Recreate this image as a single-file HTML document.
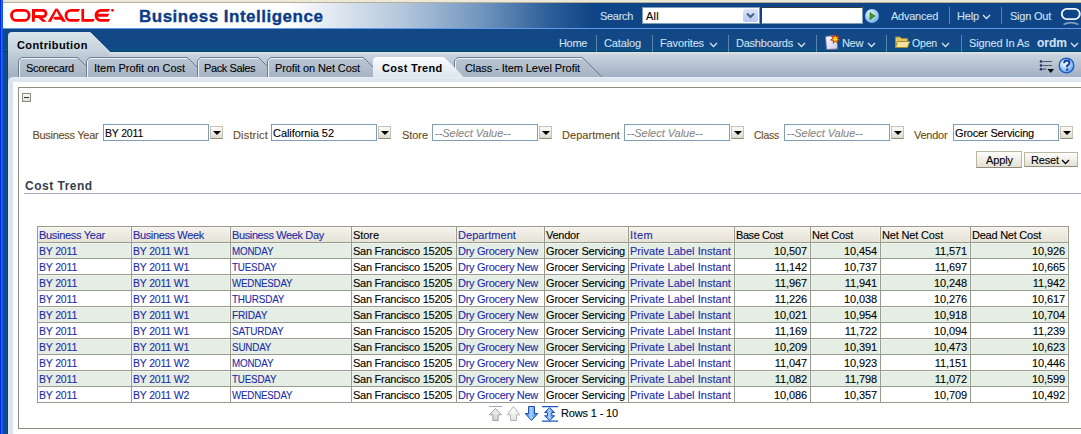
<!DOCTYPE html>
<html><head><meta charset="utf-8">
<style>
*{margin:0;padding:0;box-sizing:border-box}
html,body{width:1081px;height:434px;overflow:hidden;background:#fff;position:relative}
body{font-family:"Liberation Sans",sans-serif;font-size:11px}
.a{position:absolute}
.t{position:absolute;font-size:11px;line-height:13px;white-space:nowrap;letter-spacing:-0.3px;-webkit-text-stroke:0.1px}
.hl{color:#cde2f3}
.sep{position:absolute;width:1px;background:#5a82ad}
.chev{position:absolute;width:7px;height:4px}
.lbl{color:#6a4a14}
.inp{position:absolute;height:17px;border:1px solid #7f9db9;background:#fff}
.btn{position:absolute;width:13px;height:13px;border:1px solid #c6c3b4;border-bottom-color:#8c8a7e;background:linear-gradient(#fbfbf8,#dedbd0)}
.btn:after{content:"";position:absolute;left:2px;top:4px;border-left:4px solid transparent;border-right:4px solid transparent;border-top:4px solid #000}
.tab{position:absolute;top:57px;height:20px}
.cell{position:absolute;font-size:11px;line-height:13px;white-space:nowrap;letter-spacing:-0.3px;-webkit-text-stroke:0.1px}
.lnk{color:#1c2ca8}
</style></head><body>

<div class="a" style="left:0;top:0;width:1081px;height:2px;background:#ece9d8"></div>
<div class="a" style="left:0;top:2px;width:1081px;height:1px;background:#b8ae98"></div>
<div class="a" style="left:3px;top:3px;width:1078px;height:25px;background:linear-gradient(90deg,#fff 0px,#fff 284px,#b3c6dc 400px,#6f94bd 480px,#2e5f9a 545px,#0f4586 590px,#0f4586 1078px)"></div>
<div class="a" style="left:3px;top:28px;width:1078px;height:1px;background:#5d9ae8"></div>
<div class="a" style="left:3px;top:29px;width:1078px;height:23px;background:linear-gradient(#124885 0px,#114886 19px,#0b5282 20px,#0b5282 22px)"></div>
<div class="a" style="left:3px;top:51px;width:1078px;height:1px;background:#083e6c"></div>
<div class="a" style="left:8px;top:52px;width:1073px;height:30px;background:linear-gradient(#c2ced8,#bfcbd6 3px,#a3b1c6 24px,#a3b1c6)"></div>
<div class="a" style="left:109px;top:52px;width:972px;height:25px;background:linear-gradient(#e4eaee,#d8e0e6 1px,#d0d8e0 2px,#c8d3dc 3px,#a3b1c6 24px)"></div>
<div class="a" style="left:3px;top:52px;width:5px;height:382px;background:#134a86"></div>
<div class="a" style="left:7px;top:52px;width:1px;height:382px;background:#0b4080"></div>
<div class="a" style="left:8px;top:77px;width:1073px;height:357px;background:linear-gradient(#e8eef6,#dfe6f0 2px,#dde5ef 5px);border-top-left-radius:5px"></div>
<div class="a" style="left:8px;top:82px;width:5px;height:352px;background:linear-gradient(90deg,#e4ecf5,#dae4f0 1px)"></div>
<div class="a" style="left:13px;top:82px;width:1068px;height:352px;background:#fff"></div>
<div class="a" style="left:0;top:0;width:1px;height:434px;background:#0528d8"></div>
<div class="a" style="left:1px;top:0;width:1px;height:434px;background:#176ef0"></div>
<div class="a" style="left:2px;top:0;width:1px;height:434px;background:#0a58e8"></div>
<svg class="a" style="left:0;top:0" width="130" height="28" viewBox="0 0 130 28">
<rect x="11.5" y="10.4" width="17.6" height="10" rx="5" fill="none" stroke="#f00" stroke-width="2.8"/>
<g fill="#f00">
<rect x="32" y="9" width="2.8" height="12.8"/>
<path fill-rule="evenodd" d="M32,9 H42.9 A4.5,4.5 0 0 1 42.9,18 H32 Z M34.8,11.8 H42.9 A1.7,1.7 0 0 1 42.9,15.2 H34.8 Z"/>
<path d="M35.3,15.2 H39.5 L46.8,21.8 H42.4 Z"/>
<path d="M55.3,8.7 H57.7 L51,21.8 H47.7 Z"/>
<path d="M55.3,8.7 H57.7 L66,21.8 H62.2 Z"/>
<path d="M55.2,16.8 H62 V19.7 H55.2 A1.45,1.45 0 0 1 55.2,16.8 Z"/>
<path d="M71,9 H80.1 L78.4,11.8 H71 A3.6,3.6 0 0 0 71,19 H80.1 L78.4,21.8 H71 A6.4,6.4 0 0 1 71,9 Z"/>
<path d="M81.4,9 H84.1 V19 H94.9 L93.2,21.8 H81.4 Z"/>
<path d="M101,9 H110.1 L108.4,11.8 H101 A3.6,3.6 0 0 0 97.8,13.8 H109.3 L107.6,16.8 H97.7 A3.6,3.6 0 0 0 101,19 H110.3 L108.6,21.8 H101 A6.4,6.4 0 0 1 101,9 Z"/>
<circle cx="112.5" cy="10.3" r="1.4"/>
</g></svg>
<div class="a" style="left:139px;top:7px;font-size:17px;line-height:20px;font-weight:bold;color:#0a3c88;letter-spacing:0.5px;-webkit-text-stroke:0.35px #0a3c88;white-space:nowrap">Business Intelligence</div>
<div class="t hl" style="left:600px;top:10px;letter-spacing:-0.31px;">Search</div>
<div class="a" style="left:642px;top:7px;width:118px;height:17px;background:#fff;border:1px solid #7f9db9"></div>
<div class="t" style="left:646px;top:10px;letter-spacing:0.26px;color:#000">All</div>
<div class="a" style="left:743px;top:9px;width:15px;height:13px;background:linear-gradient(#dbe5fb,#b5c8f4);border-radius:2px"></div>
<svg class="a" style="left:745px;top:11px" width="11" height="9"><path d="M2,2.5 L5.5,6 L9,2.5" fill="none" stroke="#4d6185" stroke-width="2"/></svg>
<div class="a" style="left:761px;top:7px;width:102px;height:17px;background:#fff;border:1px solid #7f9db9;border-top-color:#3c3c3c;border-left-color:#3c3c3c"></div>
<div class="a" style="left:865px;top:9px;width:14px;height:14px;border-radius:50%;background:radial-gradient(circle at 40% 35%,#e8f4ff,#8ec0f0 60%,#3a7ad0)"></div>
<svg class="a" style="left:865px;top:9px" width="14" height="14"><path d="M5,3.5 L10,7 L5,10.5 Z" fill="#3aa020" stroke="#2a7a10" stroke-width="0.8"/></svg>
<div class="t hl" style="left:891px;top:10px;letter-spacing:-0.24px;">Advanced</div>
<div class="sep" style="left:949px;top:7px;height:17px"></div>
<div class="t hl" style="left:957px;top:10px;letter-spacing:-0.16px;">Help</div>
<svg class="a" style="left:982px;top:14px" width="9" height="6"><path d="M1,1 L4.5,4.5 L8,1" fill="none" stroke="#d6e4f2" stroke-width="1.3"/></svg>
<div class="sep" style="left:1001px;top:7px;height:17px"></div>
<div class="t hl" style="left:1010px;top:10px;letter-spacing:-0.23px;">Sign Out</div>
<svg class="a" style="left:1059px;top:7px" width="22" height="18"><rect x="2.8" y="1.9" width="18" height="10.2" rx="5.1" fill="none" stroke="#eef4fa" stroke-width="1.9"/><path d="M4.5,17.5 Q12,13.8 19.5,17.5" fill="none" stroke="#7f9fc6" stroke-width="1.6"/></svg>
<div class="t hl" style="left:559px;top:37px;letter-spacing:-0.34px;">Home</div>
<div class="sep" style="left:596px;top:35px;height:17px"></div>
<div class="t hl" style="left:604px;top:37px;letter-spacing:-0.13px;">Catalog</div>
<div class="sep" style="left:652px;top:35px;height:17px"></div>
<div class="t hl" style="left:660px;top:37px;letter-spacing:-0.14px;">Favorites</div>
<svg class="a" style="left:709px;top:42px" width="9" height="6"><path d="M1,1 L4.5,4.5 L8,1" fill="none" stroke="#d6e4f2" stroke-width="1.3"/></svg>
<div class="sep" style="left:728px;top:35px;height:17px"></div>
<div class="t hl" style="left:736px;top:37px;letter-spacing:-0.23px;">Dashboards</div>
<svg class="a" style="left:797px;top:42px" width="9" height="6"><path d="M1,1 L4.5,4.5 L8,1" fill="none" stroke="#d6e4f2" stroke-width="1.3"/></svg>
<div class="sep" style="left:816px;top:35px;height:17px"></div>
<svg class="a" style="left:824px;top:34px" width="18" height="17"><defs><linearGradient id="ng" x1="0" y1="0" x2="1" y2="1"><stop offset="0" stop-color="#ffffff"/><stop offset="1" stop-color="#c8c8e8"/></linearGradient></defs><path d="M1.5,2.5 L9,1.5 L13.5,5 V15 L2.5,15.5 Z" fill="url(#ng)" stroke="#6a6a9a" stroke-width="0.9"/><path d="M11.3,0.3 L12.4,3 L15.2,2 L13.4,4.6 L16,6 L13,6.4 L13.4,9.2 L11.3,7.2 L9.2,9.2 L9.6,6.4 L6.6,6 L9.2,4.6 L7.4,2 L10.2,3 Z" fill="#ffd820" stroke="#c02000" stroke-width="0.9" stroke-linejoin="round"/></svg>
<div class="t hl" style="left:842px;top:37px;letter-spacing:-0.34px;">New</div>
<svg class="a" style="left:867px;top:42px" width="9" height="6"><path d="M1,1 L4.5,4.5 L8,1" fill="none" stroke="#d6e4f2" stroke-width="1.3"/></svg>
<div class="sep" style="left:886px;top:35px;height:17px"></div>
<svg class="a" style="left:894px;top:35px" width="17" height="14"><path d="M1.5,2 H6 L7.5,3.5 H13.5 V12.5 H1.5 Z" fill="#dcc868" stroke="#a88a28" stroke-width="1"/><path d="M3.5,6.5 H15.8 L13.5,12.5 H1.5 Z" fill="#f0e4a0" stroke="#a88a28" stroke-width="1" stroke-linejoin="round"/></svg>
<div class="t hl" style="left:912px;top:37px;letter-spacing:-0.20px;transform:scaleX(0.958);transform-origin:0 0;">Open</div>
<svg class="a" style="left:941px;top:42px" width="9" height="6"><path d="M1,1 L4.5,4.5 L8,1" fill="none" stroke="#d6e4f2" stroke-width="1.3"/></svg>
<div class="sep" style="left:961px;top:35px;height:17px"></div>
<div class="t hl" style="left:969px;top:37px;letter-spacing:-0.11px;">Signed In As</div>
<div class="t hl" style="left:1037px;top:37px;letter-spacing:-0.02px;font-weight:bold;letter-spacing:0px;font-size:12px">ordm</div>
<svg class="a" style="left:1070px;top:42px" width="9" height="6"><path d="M1,1 L4.5,4.5 L8,1" fill="none" stroke="#d6e4f2" stroke-width="1.3"/></svg>
<svg class="a" style="left:8px;top:32px" width="104" height="21"><defs><linearGradient id="cg" x1="0" y1="0" x2="0" y2="1"><stop offset="0" stop-color="#dae5eb"/><stop offset="1" stop-color="#c4d1db"/></linearGradient></defs><path d="M0,21 V4 Q0,0 4,0 H82 L102,20 V21 Z" fill="url(#cg)"/><path d="M82,0.5 L101.5,20" stroke="#e6eef2" stroke-width="1"/></svg>
<div class="a" style="left:17px;top:39px;font-size:11px;line-height:13px;font-weight:bold;color:#000;white-space:nowrap;letter-spacing:0.4px">Contribution</div>
<svg class="a" style="left:0;top:52px" width="1081" height="26"><defs><linearGradient id="tg" x1="0" y1="0" x2="0" y2="1"><stop offset="0" stop-color="#bcc7d4"/><stop offset="1" stop-color="#a6b3c5"/></linearGradient><linearGradient id="sg" x1="0" y1="0" x2="0" y2="1"><stop offset="0" stop-color="#fbfcfd"/><stop offset="1" stop-color="#dde5ee"/></linearGradient></defs><path d="M18.5,25 V8.5 L21.5,5.5 H77.5 L96.5,24.5 V25" fill="url(#tg)" stroke="#6f7c90" stroke-width="1"/><path d="M19.5,25 V8.8 L21.8,6.5 H77" fill="none" stroke="#eef2f6" stroke-width="1"/><path d="M86.5,25 V8.5 L89.5,5.5 H187.5 L206.5,24.5 V25" fill="url(#tg)" stroke="#6f7c90" stroke-width="1"/><path d="M87.5,25 V8.8 L89.8,6.5 H187" fill="none" stroke="#eef2f6" stroke-width="1"/><path d="M197.5,25 V8.5 L200.5,5.5 H258.5 L277.5,24.5 V25" fill="url(#tg)" stroke="#6f7c90" stroke-width="1"/><path d="M198.5,25 V8.8 L200.8,6.5 H258" fill="none" stroke="#eef2f6" stroke-width="1"/><path d="M267.5,25 V8.5 L270.5,5.5 H363.5 L382.5,24.5 V25" fill="url(#tg)" stroke="#6f7c90" stroke-width="1"/><path d="M268.5,25 V8.8 L270.8,6.5 H363" fill="none" stroke="#eef2f6" stroke-width="1"/><path d="M454.5,25 V8.5 L457.5,5.5 H582.5 L601.5,24.5 V25" fill="url(#tg)" stroke="#6f7c90" stroke-width="1"/><path d="M455.5,25 V8.8 L457.8,6.5 H582" fill="none" stroke="#eef2f6" stroke-width="1"/><path d="M373,25 V9 Q373,5 377,5 H444 L463,24 V25 Z" fill="url(#sg)"/></svg>
<div class="t" style="left:26px;top:62px;letter-spacing:-0.24px;color:#000">Scorecard</div>
<div class="t" style="left:94px;top:62px;letter-spacing:-0.00px;color:#000">Item Profit on Cost</div>
<div class="t" style="left:204px;top:62px;letter-spacing:-0.40px;color:#000">Pack Sales</div>
<div class="t" style="left:275px;top:62px;letter-spacing:-0.10px;color:#000">Profit on Net Cost</div>
<div class="a" style="left:382px;top:62px;font-size:11px;line-height:13px;font-weight:bold;color:#000;white-space:nowrap;letter-spacing:0.3px">Cost Trend</div>
<div class="t" style="left:465px;top:62px;letter-spacing:-0.07px;color:#000">Class - Item Level Profit</div>
<svg class="a" style="left:1038px;top:58px" width="18" height="18"><g fill="#2a2a70"><circle cx="3" cy="3.5" r="1.3"/><circle cx="3" cy="7.5" r="1.3"/><circle cx="3" cy="11.2" r="1.3"/></g><g stroke="#505a68" stroke-width="1.2"><path d="M4.5,3.5 H14 M4.5,7.5 H14 M4.5,11.2 H8"/></g><path d="M9.5,11 H16 L12.75,15 Z" fill="#000"/></svg>
<svg class="a" style="left:1058px;top:57px" width="18" height="18"><defs><radialGradient id="hg" cx="0.4" cy="0.35" r="0.7"><stop offset="0" stop-color="#ffffff"/><stop offset="0.6" stop-color="#9ccaf6"/><stop offset="1" stop-color="#5a9ce8"/></radialGradient></defs><circle cx="8.5" cy="8.5" r="7.3" fill="url(#hg)" stroke="#1a5cc0" stroke-width="1.4"/><path d="M6.2,6.3 Q6.2,3.6 8.8,3.6 Q11.4,3.6 11.4,6 Q11.4,7.6 9.2,8.6 V10.2" fill="none" stroke="#1a3aa0" stroke-width="2"/><circle cx="9.2" cy="12.6" r="1.2" fill="#1a3aa0"/></svg>
<div class="a" style="left:18px;top:87px;width:1100px;height:342px;border:1px solid #8c8c80"></div>
<div class="a" style="left:22px;top:93px;width:9px;height:9px;border:1px solid #8a8a80;background:linear-gradient(#fbfbf6,#e2e0d4)"></div>
<div class="a" style="left:24px;top:97px;width:5px;height:1px;background:#303030"></div>
<div class="t lbl" style="left:32.5px;top:129px;letter-spacing:-0.30px;">Business Year</div>
<div class="inp" style="left:103px;top:124px;width:106px"></div>
<div class="t" style="left:105px;top:127px;letter-spacing:-0.20px;transform:scaleX(0.956);transform-origin:0 0;color:#000">BY 2011</div>
<div class="btn" style="left:210px;top:126px"></div>
<div class="t lbl" style="left:233px;top:129px;letter-spacing:0.17px;">District</div>
<div class="inp" style="left:271px;top:124px;width:106px"></div>
<div class="t" style="left:273px;top:127px;letter-spacing:-0.06px;color:#000">California 52</div>
<div class="btn" style="left:378px;top:126px"></div>
<div class="t lbl" style="left:402px;top:129px;letter-spacing:-0.06px;">Store</div>
<div class="inp" style="left:432px;top:124px;width:106px"></div>
<div class="t" style="left:435px;top:127px;letter-spacing:-0.03px;color:#8a8a8a;font-style:italic">--Select Value--</div>
<div class="btn" style="left:539px;top:126px"></div>
<div class="t lbl" style="left:562px;top:129px;letter-spacing:0.05px;">Department</div>
<div class="inp" style="left:624px;top:124px;width:106px"></div>
<div class="t" style="left:627px;top:127px;letter-spacing:-0.03px;color:#8a8a8a;font-style:italic">--Select Value--</div>
<div class="btn" style="left:731px;top:126px"></div>
<div class="t lbl" style="left:754px;top:129px;letter-spacing:-0.20px;transform:scaleX(0.943);transform-origin:0 0;">Class</div>
<div class="inp" style="left:784px;top:124px;width:106px"></div>
<div class="t" style="left:787px;top:127px;letter-spacing:-0.03px;color:#8a8a8a;font-style:italic">--Select Value--</div>
<div class="btn" style="left:891px;top:126px"></div>
<div class="t lbl" style="left:914px;top:129px;letter-spacing:-0.25px;">Vendor</div>
<div class="inp" style="left:953px;top:124px;width:106px"></div>
<div class="t" style="left:955px;top:127px;letter-spacing:-0.18px;color:#000">Grocer Servicing</div>
<div class="btn" style="left:1060px;top:126px"></div>
<div class="a" style="left:976px;top:151px;width:46px;height:17px;border:1px solid #bcb8a0;border-bottom-color:#8f8c7c;background:linear-gradient(#fdfdfb,#e3e0d4)"></div>
<div class="t" style="left:986px;top:154px;letter-spacing:-0.10px;color:#000">Apply</div>
<div class="a" style="left:1024px;top:152px;width:54px;height:15px;border:1px solid #bcb8a0;border-bottom-color:#8f8c7c;background:linear-gradient(#fdfdfb,#e3e0d4)"></div>
<div class="t" style="left:1031px;top:154px;letter-spacing:-0.15px;color:#000">Reset</div>
<svg class="a" style="left:1061px;top:159px" width="9" height="6"><path d="M1,1 L4.5,4.5 L8,1" fill="none" stroke="#000" stroke-width="1.3"/></svg>
<div class="a" style="left:25px;top:179px;font-size:12px;line-height:14px;font-weight:bold;color:#333f4e;white-space:nowrap;letter-spacing:0.5px">Cost Trend</div>
<div class="a" style="left:24px;top:193px;width:1060px;height:1px;background:#a0a8b8"></div>
<div class="a" style="left:37px;top:226px;width:1032px;height:16px;background:linear-gradient(#f6f4ee,#e6e2d6)"></div>
<div class="a" style="left:37px;top:242px;width:1032px;height:16px;background:#e5eee5"></div>
<div class="a" style="left:37px;top:258px;width:1032px;height:16px;background:#fff"></div>
<div class="a" style="left:37px;top:274px;width:1032px;height:16px;background:#e5eee5"></div>
<div class="a" style="left:37px;top:290px;width:1032px;height:16px;background:#fff"></div>
<div class="a" style="left:37px;top:306px;width:1032px;height:16px;background:#e5eee5"></div>
<div class="a" style="left:37px;top:322px;width:1032px;height:16px;background:#fff"></div>
<div class="a" style="left:37px;top:338px;width:1032px;height:16px;background:#e5eee5"></div>
<div class="a" style="left:37px;top:354px;width:1032px;height:16px;background:#fff"></div>
<div class="a" style="left:37px;top:370px;width:1032px;height:16px;background:#e5eee5"></div>
<div class="a" style="left:37px;top:386px;width:1032px;height:16px;background:#fff"></div>
<div class="a" style="left:37px;top:227px;width:1032px;height:1px;background:rgba(255,255,255,0.3)"></div>
<div class="a" style="left:37px;top:243px;width:1032px;height:1px;background:rgba(255,255,255,0.3)"></div>
<div class="a" style="left:37px;top:259px;width:1032px;height:1px;background:rgba(255,255,255,0.3)"></div>
<div class="a" style="left:37px;top:275px;width:1032px;height:1px;background:rgba(255,255,255,0.3)"></div>
<div class="a" style="left:37px;top:291px;width:1032px;height:1px;background:rgba(255,255,255,0.3)"></div>
<div class="a" style="left:37px;top:307px;width:1032px;height:1px;background:rgba(255,255,255,0.3)"></div>
<div class="a" style="left:37px;top:323px;width:1032px;height:1px;background:rgba(255,255,255,0.3)"></div>
<div class="a" style="left:37px;top:339px;width:1032px;height:1px;background:rgba(255,255,255,0.3)"></div>
<div class="a" style="left:37px;top:355px;width:1032px;height:1px;background:rgba(255,255,255,0.3)"></div>
<div class="a" style="left:37px;top:371px;width:1032px;height:1px;background:rgba(255,255,255,0.3)"></div>
<div class="a" style="left:37px;top:387px;width:1032px;height:1px;background:rgba(255,255,255,0.3)"></div>
<div class="a" style="left:36px;top:226px;width:3px;height:177px;background:rgba(255,255,255,0.3)"></div>
<div class="a" style="left:130px;top:226px;width:3px;height:177px;background:rgba(255,255,255,0.3)"></div>
<div class="a" style="left:229px;top:226px;width:3px;height:177px;background:rgba(255,255,255,0.3)"></div>
<div class="a" style="left:350px;top:226px;width:3px;height:177px;background:rgba(255,255,255,0.3)"></div>
<div class="a" style="left:455px;top:226px;width:3px;height:177px;background:rgba(255,255,255,0.3)"></div>
<div class="a" style="left:543px;top:226px;width:3px;height:177px;background:rgba(255,255,255,0.3)"></div>
<div class="a" style="left:627px;top:226px;width:3px;height:177px;background:rgba(255,255,255,0.3)"></div>
<div class="a" style="left:733px;top:226px;width:3px;height:177px;background:rgba(255,255,255,0.3)"></div>
<div class="a" style="left:809px;top:226px;width:3px;height:177px;background:rgba(255,255,255,0.3)"></div>
<div class="a" style="left:879px;top:226px;width:3px;height:177px;background:rgba(255,255,255,0.3)"></div>
<div class="a" style="left:969px;top:226px;width:3px;height:177px;background:rgba(255,255,255,0.3)"></div>
<div class="a" style="left:1067px;top:226px;width:3px;height:177px;background:rgba(255,255,255,0.3)"></div>
<div class="a" style="left:37px;top:226px;width:1px;height:177px;background:#9a9a8e"></div>
<div class="a" style="left:131px;top:226px;width:1px;height:177px;background:#9a9a8e"></div>
<div class="a" style="left:230px;top:226px;width:1px;height:177px;background:#9a9a8e"></div>
<div class="a" style="left:351px;top:226px;width:1px;height:177px;background:#9a9a8e"></div>
<div class="a" style="left:456px;top:226px;width:1px;height:177px;background:#9a9a8e"></div>
<div class="a" style="left:544px;top:226px;width:1px;height:177px;background:#9a9a8e"></div>
<div class="a" style="left:628px;top:226px;width:1px;height:177px;background:#9a9a8e"></div>
<div class="a" style="left:734px;top:226px;width:1px;height:177px;background:#9a9a8e"></div>
<div class="a" style="left:810px;top:226px;width:1px;height:177px;background:#9a9a8e"></div>
<div class="a" style="left:880px;top:226px;width:1px;height:177px;background:#9a9a8e"></div>
<div class="a" style="left:970px;top:226px;width:1px;height:177px;background:#9a9a8e"></div>
<div class="a" style="left:1068px;top:226px;width:1px;height:177px;background:#9a9a8e"></div>
<div class="a" style="left:37px;top:226px;width:1032px;height:1px;background:#9a9a8e"></div>
<div class="a" style="left:37px;top:242px;width:1032px;height:1px;background:#9a9a8e"></div>
<div class="a" style="left:37px;top:258px;width:1032px;height:1px;background:#9a9a8e"></div>
<div class="a" style="left:37px;top:274px;width:1032px;height:1px;background:#9a9a8e"></div>
<div class="a" style="left:37px;top:290px;width:1032px;height:1px;background:#9a9a8e"></div>
<div class="a" style="left:37px;top:306px;width:1032px;height:1px;background:#9a9a8e"></div>
<div class="a" style="left:37px;top:322px;width:1032px;height:1px;background:#9a9a8e"></div>
<div class="a" style="left:37px;top:338px;width:1032px;height:1px;background:#9a9a8e"></div>
<div class="a" style="left:37px;top:354px;width:1032px;height:1px;background:#9a9a8e"></div>
<div class="a" style="left:37px;top:370px;width:1032px;height:1px;background:#9a9a8e"></div>
<div class="a" style="left:37px;top:386px;width:1032px;height:1px;background:#9a9a8e"></div>
<div class="a" style="left:37px;top:402px;width:1032px;height:1px;background:#9a9a8e"></div>
<div class="cell lnk" style="left:39px;top:229px;letter-spacing:-0.30px;">Business Year</div>
<div class="cell lnk" style="left:133px;top:229px;letter-spacing:-0.37px;">Business Week</div>
<div class="cell lnk" style="left:232px;top:229px;letter-spacing:-0.38px;">Business Week Day</div>
<div class="cell" style="left:353px;top:229px;letter-spacing:-0.06px;color:#000">Store</div>
<div class="cell lnk" style="left:458px;top:229px;letter-spacing:0.05px;">Department</div>
<div class="cell" style="left:546px;top:229px;letter-spacing:-0.25px;color:#000">Vendor</div>
<div class="cell lnk" style="left:630px;top:229px;letter-spacing:0.40px;">Item</div>
<div class="cell" style="left:736px;top:229px;letter-spacing:-0.42px;color:#000">Base Cost</div>
<div class="cell" style="left:812px;top:229px;letter-spacing:-0.22px;color:#000">Net Cost</div>
<div class="cell" style="left:882px;top:229px;letter-spacing:-0.16px;color:#000">Net Net Cost</div>
<div class="cell" style="left:972px;top:229px;letter-spacing:-0.24px;color:#000">Dead Net Cost</div>
<div class="cell lnk" style="left:39px;top:245px;letter-spacing:-0.20px;transform:scaleX(0.956);transform-origin:0 0;">BY 2011</div>
<div class="cell lnk" style="left:133px;top:245px;letter-spacing:-0.20px;transform:scaleX(0.954);transform-origin:0 0;">BY 2011 W1</div>
<div class="cell lnk" style="left:232px;top:245px;letter-spacing:-0.20px;transform:scaleX(0.892);transform-origin:0 0;">MONDAY</div>
<div class="cell" style="left:353px;top:245px;letter-spacing:-0.26px;color:#000">San Francisco 15205</div>
<div class="cell lnk" style="left:458px;top:245px;letter-spacing:-0.29px;">Dry Grocery New</div>
<div class="cell" style="left:546px;top:245px;letter-spacing:-0.18px;color:#000">Grocer Servicing</div>
<div class="cell lnk" style="left:630px;top:245px;letter-spacing:0.03px;">Private Label Instant</div>
<div class="cell" style="right:274px;top:245px;color:#000;letter-spacing:-0.11px">10,507</div>
<div class="cell" style="right:204px;top:245px;color:#000;letter-spacing:-0.11px">10,454</div>
<div class="cell" style="right:114px;top:245px;color:#000;letter-spacing:-0.11px">11,571</div>
<div class="cell" style="right:16px;top:245px;color:#000;letter-spacing:-0.11px">10,926</div>
<div class="cell lnk" style="left:39px;top:261px;letter-spacing:-0.20px;transform:scaleX(0.956);transform-origin:0 0;">BY 2011</div>
<div class="cell lnk" style="left:133px;top:261px;letter-spacing:-0.20px;transform:scaleX(0.954);transform-origin:0 0;">BY 2011 W1</div>
<div class="cell lnk" style="left:232px;top:261px;letter-spacing:-0.20px;transform:scaleX(0.890);transform-origin:0 0;">TUESDAY</div>
<div class="cell" style="left:353px;top:261px;letter-spacing:-0.26px;color:#000">San Francisco 15205</div>
<div class="cell lnk" style="left:458px;top:261px;letter-spacing:-0.29px;">Dry Grocery New</div>
<div class="cell" style="left:546px;top:261px;letter-spacing:-0.18px;color:#000">Grocer Servicing</div>
<div class="cell lnk" style="left:630px;top:261px;letter-spacing:0.03px;">Private Label Instant</div>
<div class="cell" style="right:274px;top:261px;color:#000;letter-spacing:-0.11px">11,142</div>
<div class="cell" style="right:204px;top:261px;color:#000;letter-spacing:-0.11px">10,737</div>
<div class="cell" style="right:114px;top:261px;color:#000;letter-spacing:-0.11px">11,697</div>
<div class="cell" style="right:16px;top:261px;color:#000;letter-spacing:-0.11px">10,665</div>
<div class="cell lnk" style="left:39px;top:277px;letter-spacing:-0.20px;transform:scaleX(0.956);transform-origin:0 0;">BY 2011</div>
<div class="cell lnk" style="left:133px;top:277px;letter-spacing:-0.20px;transform:scaleX(0.954);transform-origin:0 0;">BY 2011 W1</div>
<div class="cell lnk" style="left:232px;top:277px;letter-spacing:-0.20px;transform:scaleX(0.883);transform-origin:0 0;">WEDNESDAY</div>
<div class="cell" style="left:353px;top:277px;letter-spacing:-0.26px;color:#000">San Francisco 15205</div>
<div class="cell lnk" style="left:458px;top:277px;letter-spacing:-0.29px;">Dry Grocery New</div>
<div class="cell" style="left:546px;top:277px;letter-spacing:-0.18px;color:#000">Grocer Servicing</div>
<div class="cell lnk" style="left:630px;top:277px;letter-spacing:0.03px;">Private Label Instant</div>
<div class="cell" style="right:274px;top:277px;color:#000;letter-spacing:-0.11px">11,967</div>
<div class="cell" style="right:204px;top:277px;color:#000;letter-spacing:-0.11px">11,941</div>
<div class="cell" style="right:114px;top:277px;color:#000;letter-spacing:-0.11px">10,248</div>
<div class="cell" style="right:16px;top:277px;color:#000;letter-spacing:-0.11px">11,942</div>
<div class="cell lnk" style="left:39px;top:293px;letter-spacing:-0.20px;transform:scaleX(0.956);transform-origin:0 0;">BY 2011</div>
<div class="cell lnk" style="left:133px;top:293px;letter-spacing:-0.20px;transform:scaleX(0.954);transform-origin:0 0;">BY 2011 W1</div>
<div class="cell lnk" style="left:232px;top:293px;letter-spacing:-0.20px;transform:scaleX(0.900);transform-origin:0 0;">THURSDAY</div>
<div class="cell" style="left:353px;top:293px;letter-spacing:-0.26px;color:#000">San Francisco 15205</div>
<div class="cell lnk" style="left:458px;top:293px;letter-spacing:-0.29px;">Dry Grocery New</div>
<div class="cell" style="left:546px;top:293px;letter-spacing:-0.18px;color:#000">Grocer Servicing</div>
<div class="cell lnk" style="left:630px;top:293px;letter-spacing:0.03px;">Private Label Instant</div>
<div class="cell" style="right:274px;top:293px;color:#000;letter-spacing:-0.11px">11,226</div>
<div class="cell" style="right:204px;top:293px;color:#000;letter-spacing:-0.11px">10,038</div>
<div class="cell" style="right:114px;top:293px;color:#000;letter-spacing:-0.11px">10,276</div>
<div class="cell" style="right:16px;top:293px;color:#000;letter-spacing:-0.11px">10,617</div>
<div class="cell lnk" style="left:39px;top:309px;letter-spacing:-0.20px;transform:scaleX(0.956);transform-origin:0 0;">BY 2011</div>
<div class="cell lnk" style="left:133px;top:309px;letter-spacing:-0.20px;transform:scaleX(0.954);transform-origin:0 0;">BY 2011 W1</div>
<div class="cell lnk" style="left:232px;top:309px;letter-spacing:-0.20px;transform:scaleX(0.920);transform-origin:0 0;">FRIDAY</div>
<div class="cell" style="left:353px;top:309px;letter-spacing:-0.26px;color:#000">San Francisco 15205</div>
<div class="cell lnk" style="left:458px;top:309px;letter-spacing:-0.29px;">Dry Grocery New</div>
<div class="cell" style="left:546px;top:309px;letter-spacing:-0.18px;color:#000">Grocer Servicing</div>
<div class="cell lnk" style="left:630px;top:309px;letter-spacing:0.03px;">Private Label Instant</div>
<div class="cell" style="right:274px;top:309px;color:#000;letter-spacing:-0.11px">10,021</div>
<div class="cell" style="right:204px;top:309px;color:#000;letter-spacing:-0.11px">10,954</div>
<div class="cell" style="right:114px;top:309px;color:#000;letter-spacing:-0.11px">10,918</div>
<div class="cell" style="right:16px;top:309px;color:#000;letter-spacing:-0.11px">10,704</div>
<div class="cell lnk" style="left:39px;top:325px;letter-spacing:-0.20px;transform:scaleX(0.956);transform-origin:0 0;">BY 2011</div>
<div class="cell lnk" style="left:133px;top:325px;letter-spacing:-0.20px;transform:scaleX(0.954);transform-origin:0 0;">BY 2011 W1</div>
<div class="cell lnk" style="left:232px;top:325px;letter-spacing:-0.20px;transform:scaleX(0.909);transform-origin:0 0;">SATURDAY</div>
<div class="cell" style="left:353px;top:325px;letter-spacing:-0.26px;color:#000">San Francisco 15205</div>
<div class="cell lnk" style="left:458px;top:325px;letter-spacing:-0.29px;">Dry Grocery New</div>
<div class="cell" style="left:546px;top:325px;letter-spacing:-0.18px;color:#000">Grocer Servicing</div>
<div class="cell lnk" style="left:630px;top:325px;letter-spacing:0.03px;">Private Label Instant</div>
<div class="cell" style="right:274px;top:325px;color:#000;letter-spacing:-0.11px">11,169</div>
<div class="cell" style="right:204px;top:325px;color:#000;letter-spacing:-0.11px">11,722</div>
<div class="cell" style="right:114px;top:325px;color:#000;letter-spacing:-0.11px">10,094</div>
<div class="cell" style="right:16px;top:325px;color:#000;letter-spacing:-0.11px">11,239</div>
<div class="cell lnk" style="left:39px;top:341px;letter-spacing:-0.20px;transform:scaleX(0.956);transform-origin:0 0;">BY 2011</div>
<div class="cell lnk" style="left:133px;top:341px;letter-spacing:-0.20px;transform:scaleX(0.954);transform-origin:0 0;">BY 2011 W1</div>
<div class="cell lnk" style="left:232px;top:341px;letter-spacing:-0.20px;transform:scaleX(0.896);transform-origin:0 0;">SUNDAY</div>
<div class="cell" style="left:353px;top:341px;letter-spacing:-0.26px;color:#000">San Francisco 15205</div>
<div class="cell lnk" style="left:458px;top:341px;letter-spacing:-0.29px;">Dry Grocery New</div>
<div class="cell" style="left:546px;top:341px;letter-spacing:-0.18px;color:#000">Grocer Servicing</div>
<div class="cell lnk" style="left:630px;top:341px;letter-spacing:0.03px;">Private Label Instant</div>
<div class="cell" style="right:274px;top:341px;color:#000;letter-spacing:-0.11px">10,209</div>
<div class="cell" style="right:204px;top:341px;color:#000;letter-spacing:-0.11px">10,391</div>
<div class="cell" style="right:114px;top:341px;color:#000;letter-spacing:-0.11px">10,473</div>
<div class="cell" style="right:16px;top:341px;color:#000;letter-spacing:-0.11px">10,623</div>
<div class="cell lnk" style="left:39px;top:357px;letter-spacing:-0.20px;transform:scaleX(0.956);transform-origin:0 0;">BY 2011</div>
<div class="cell lnk" style="left:133px;top:357px;letter-spacing:-0.20px;transform:scaleX(0.954);transform-origin:0 0;">BY 2011 W2</div>
<div class="cell lnk" style="left:232px;top:357px;letter-spacing:-0.20px;transform:scaleX(0.892);transform-origin:0 0;">MONDAY</div>
<div class="cell" style="left:353px;top:357px;letter-spacing:-0.26px;color:#000">San Francisco 15205</div>
<div class="cell lnk" style="left:458px;top:357px;letter-spacing:-0.29px;">Dry Grocery New</div>
<div class="cell" style="left:546px;top:357px;letter-spacing:-0.18px;color:#000">Grocer Servicing</div>
<div class="cell lnk" style="left:630px;top:357px;letter-spacing:0.03px;">Private Label Instant</div>
<div class="cell" style="right:274px;top:357px;color:#000;letter-spacing:-0.11px">11,047</div>
<div class="cell" style="right:204px;top:357px;color:#000;letter-spacing:-0.11px">10,923</div>
<div class="cell" style="right:114px;top:357px;color:#000;letter-spacing:-0.11px">11,151</div>
<div class="cell" style="right:16px;top:357px;color:#000;letter-spacing:-0.11px">10,446</div>
<div class="cell lnk" style="left:39px;top:373px;letter-spacing:-0.20px;transform:scaleX(0.956);transform-origin:0 0;">BY 2011</div>
<div class="cell lnk" style="left:133px;top:373px;letter-spacing:-0.20px;transform:scaleX(0.954);transform-origin:0 0;">BY 2011 W2</div>
<div class="cell lnk" style="left:232px;top:373px;letter-spacing:-0.20px;transform:scaleX(0.890);transform-origin:0 0;">TUESDAY</div>
<div class="cell" style="left:353px;top:373px;letter-spacing:-0.26px;color:#000">San Francisco 15205</div>
<div class="cell lnk" style="left:458px;top:373px;letter-spacing:-0.29px;">Dry Grocery New</div>
<div class="cell" style="left:546px;top:373px;letter-spacing:-0.18px;color:#000">Grocer Servicing</div>
<div class="cell lnk" style="left:630px;top:373px;letter-spacing:0.03px;">Private Label Instant</div>
<div class="cell" style="right:274px;top:373px;color:#000;letter-spacing:-0.11px">11,082</div>
<div class="cell" style="right:204px;top:373px;color:#000;letter-spacing:-0.11px">11,798</div>
<div class="cell" style="right:114px;top:373px;color:#000;letter-spacing:-0.11px">11,072</div>
<div class="cell" style="right:16px;top:373px;color:#000;letter-spacing:-0.11px">10,599</div>
<div class="cell lnk" style="left:39px;top:389px;letter-spacing:-0.20px;transform:scaleX(0.956);transform-origin:0 0;">BY 2011</div>
<div class="cell lnk" style="left:133px;top:389px;letter-spacing:-0.20px;transform:scaleX(0.954);transform-origin:0 0;">BY 2011 W2</div>
<div class="cell lnk" style="left:232px;top:389px;letter-spacing:-0.20px;transform:scaleX(0.883);transform-origin:0 0;">WEDNESDAY</div>
<div class="cell" style="left:353px;top:389px;letter-spacing:-0.26px;color:#000">San Francisco 15205</div>
<div class="cell lnk" style="left:458px;top:389px;letter-spacing:-0.29px;">Dry Grocery New</div>
<div class="cell" style="left:546px;top:389px;letter-spacing:-0.18px;color:#000">Grocer Servicing</div>
<div class="cell lnk" style="left:630px;top:389px;letter-spacing:0.03px;">Private Label Instant</div>
<div class="cell" style="right:274px;top:389px;color:#000;letter-spacing:-0.11px">10,086</div>
<div class="cell" style="right:204px;top:389px;color:#000;letter-spacing:-0.11px">10,357</div>
<div class="cell" style="right:114px;top:389px;color:#000;letter-spacing:-0.11px">10,709</div>
<div class="cell" style="right:16px;top:389px;color:#000;letter-spacing:-0.11px">10,492</div>
<svg class="a" style="left:488px;top:405px" width="72" height="18"><defs><linearGradient id="pg1" x1="0" y1="0" x2="0" y2="1"><stop offset="0" stop-color="#f6f6f6"/><stop offset="1" stop-color="#cfcfcf"/></linearGradient><linearGradient id="pg2" x1="0" y1="0" x2="0" y2="1"><stop offset="0" stop-color="#ffffff"/><stop offset="1" stop-color="#e2e2e2"/></linearGradient><linearGradient id="pg3" x1="0" y1="0" x2="1" y2="0"><stop offset="0" stop-color="#1f6ad8"/><stop offset="0.45" stop-color="#a8d6ff"/><stop offset="1" stop-color="#2a70d8"/></linearGradient></defs><path d="M1,1.5 H14" stroke="#a8a8a8" stroke-width="1"/><path d="M7.5,3.5 L13.5,9.8 H10.2 V15.5 H4.8 V9.8 H1.5 Z" fill="url(#pg1)" stroke="#a0a0a0" stroke-width="1" stroke-linejoin="round"/><path d="M25.5,1.5 L31.8,9.8 H28.5 V15.5 H22.5 V9.8 H19.2 Z" fill="url(#pg2)" stroke="#b4b4b4" stroke-width="1" stroke-linejoin="round"/><path d="M40.5,1.5 H46.5 V8.5 H49.8 L43.5,15.5 L37.2,8.5 H40.5 Z" fill="url(#pg3)" stroke="#1a4cb0" stroke-width="1" stroke-linejoin="round"/><path d="M54,1.6 H70 M54,16.2 H70" stroke="#1a56c0" stroke-width="1.2"/><path d="M61.6,2.6 L66.6,7.6 H63.8 V10.8 H66.6 L61.6,15.6 L56.6,10.8 H59.4 V7.6 H56.6 Z" fill="url(#pg3)" stroke="#1a4cb0" stroke-width="1" stroke-linejoin="round"/></svg>
<div class="t" style="left:561px;top:407px;letter-spacing:-0.15px;color:#000">Rows 1 - 10</div>
</body></html>
